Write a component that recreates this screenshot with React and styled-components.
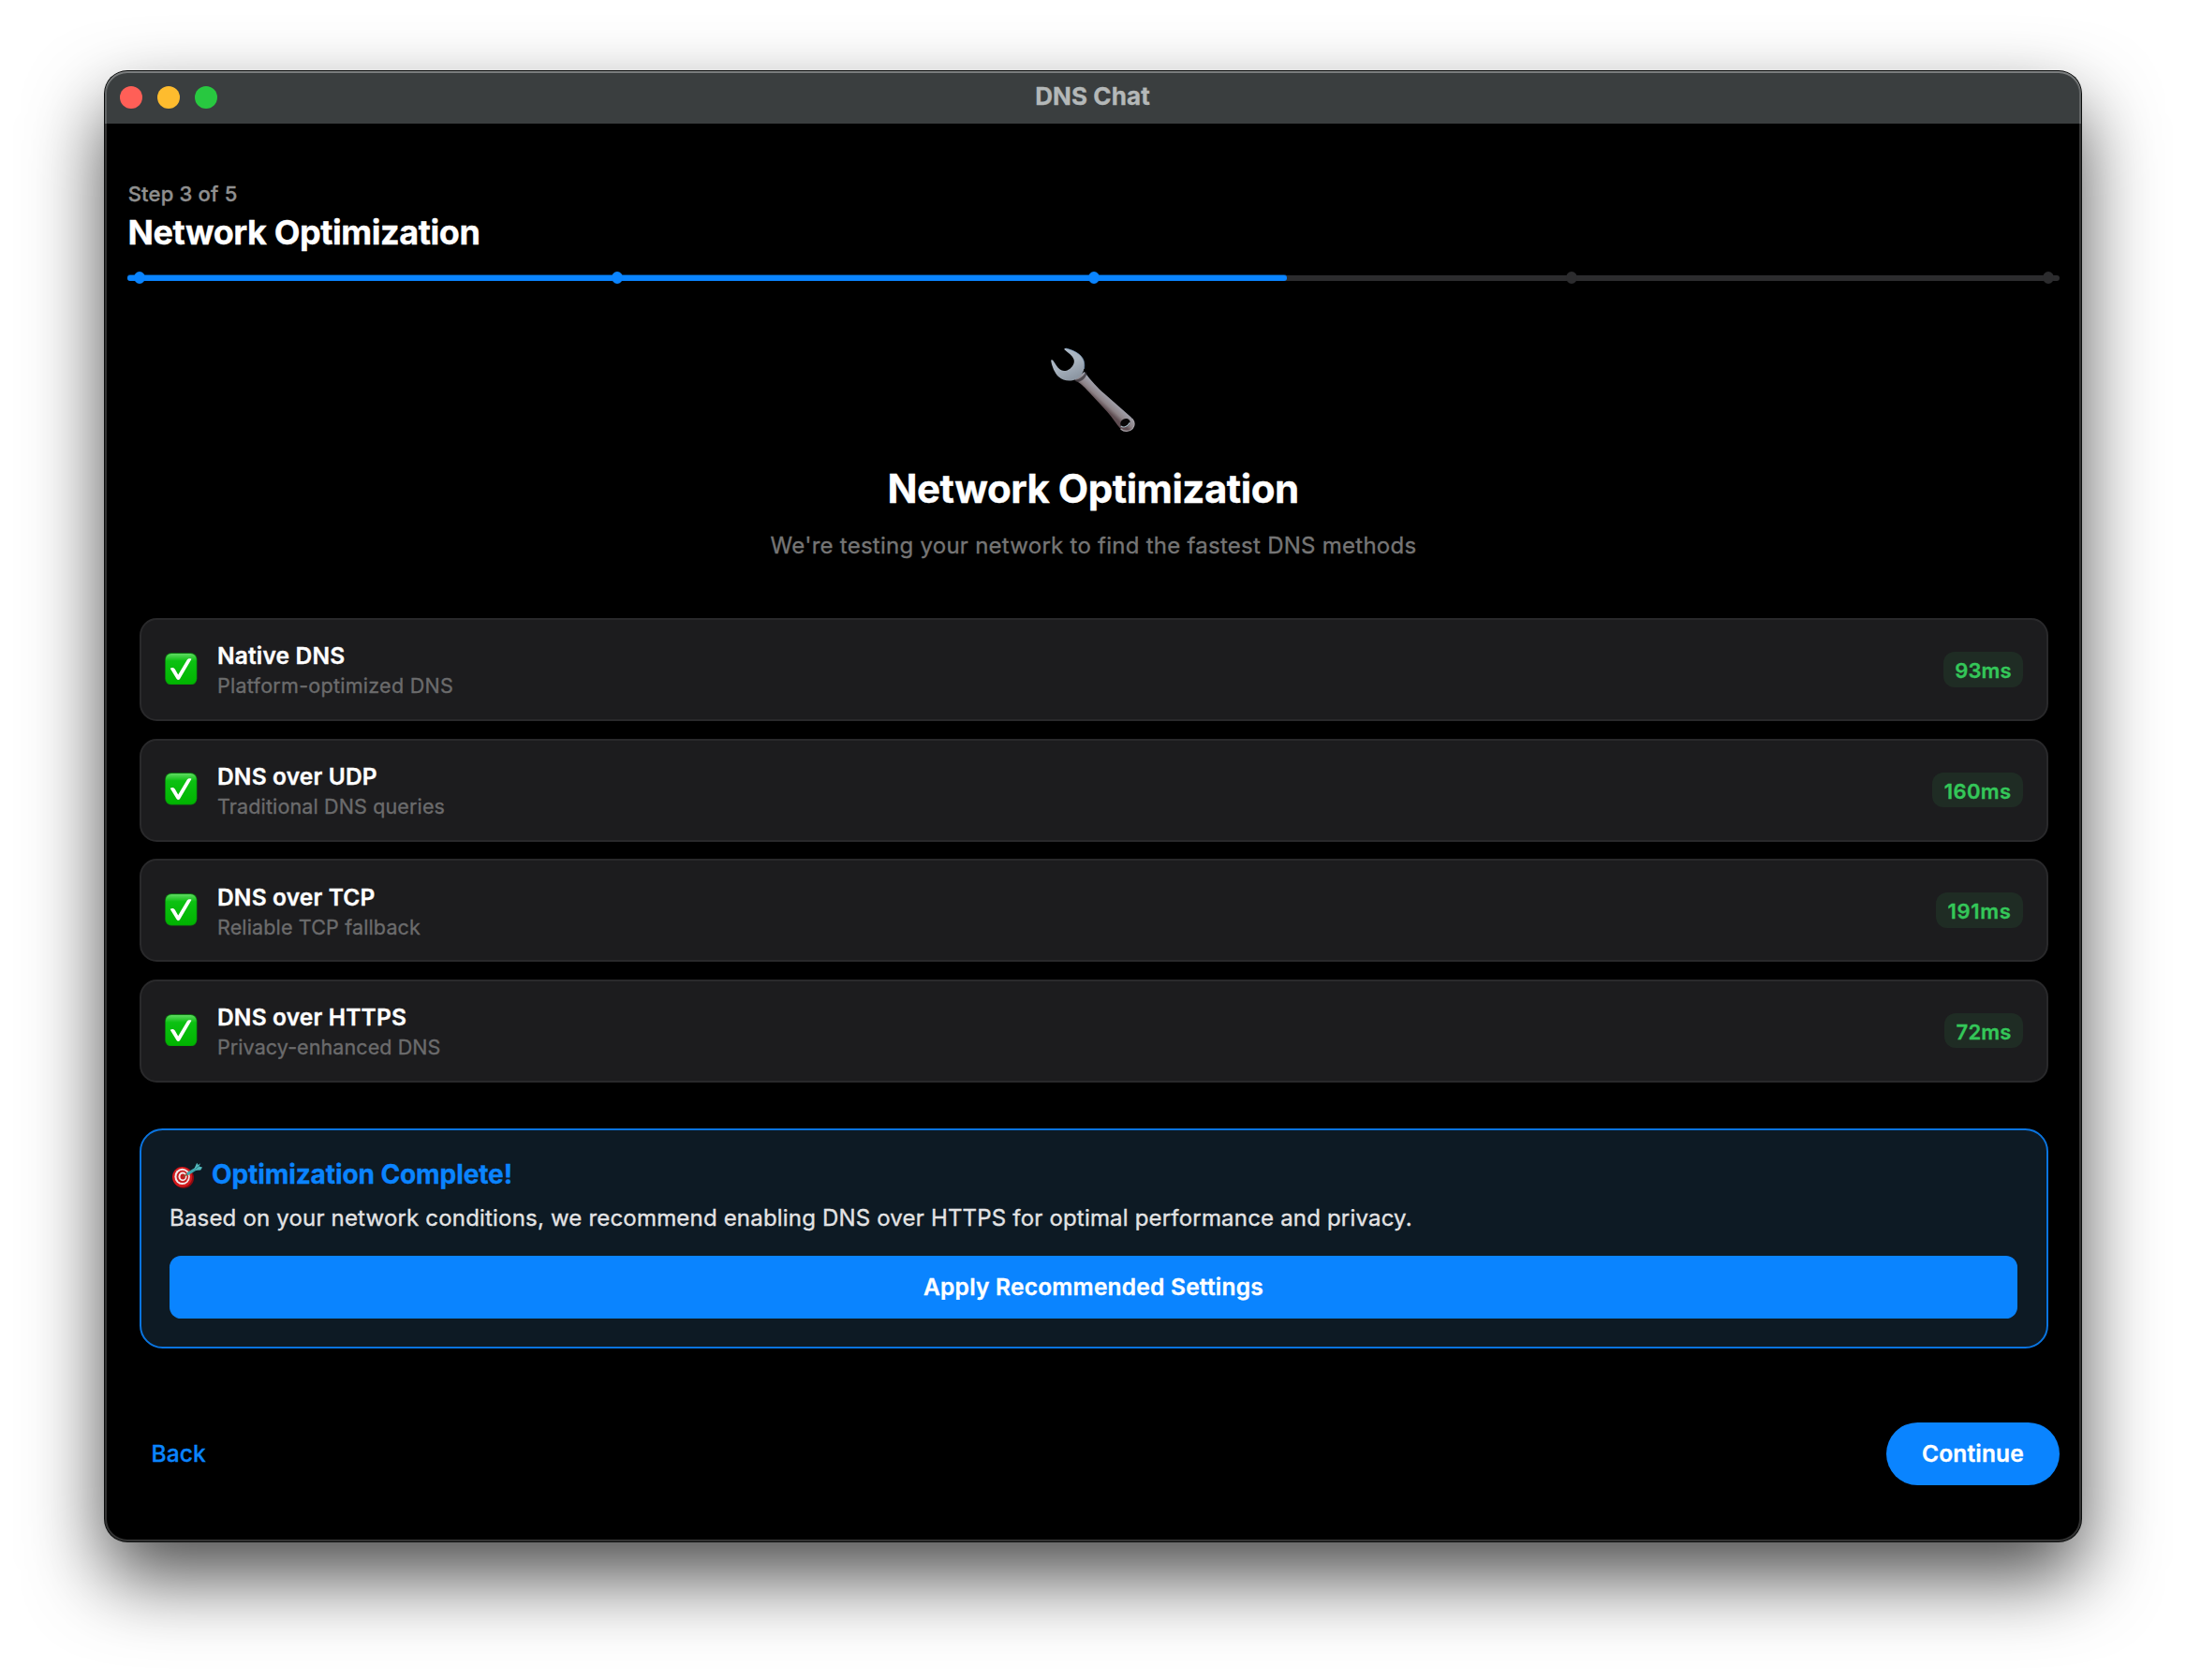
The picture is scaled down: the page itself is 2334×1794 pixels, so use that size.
import React from "react";
import styled, { createGlobalStyle } from "styled-components";

const GlobalStyle = createGlobalStyle`
  * { box-sizing: border-box; }
  html, body { margin: 0; background: #fff; }
  body {
    font-family: Inter, "Liberation Sans", sans-serif;
    -webkit-font-smoothing: antialiased;
    -webkit-text-stroke: 0.35px currentColor;
  }
  button {
    font: inherit;
    border: 0;
    padding: 0;
    margin: 0;
    background: none;
    cursor: pointer;
  }
`;

const Desktop = styled.div`
  height: 1794px;
  padding: 76px 112px 0;
  overflow: hidden;
`;

const Window = styled.main`
  position: relative;
  height: 1570px;
  display: flex;
  flex-direction: column;
  border-radius: 24px;
  background: #000;
  box-shadow:
    0 0 0 1px #0b0d0d,
    0 38px 82px rgba(0, 0, 0, 0.7);

  &::after {
    content: "";
    position: absolute;
    inset: 0;
    border-radius: 24px;
    pointer-events: none;
    box-shadow:
      inset 0 0 0 2px rgba(255, 255, 255, 0.2),
      inset 0 2px 0 rgba(255, 255, 255, 0.17);
  }
`;

const TitleBar = styled.header`
  height: 56px;
  flex: none;
  display: grid;
  grid-template-columns: 1fr auto 1fr;
  align-items: center;
  padding: 0 17px 0 16px;
  border-radius: 24px 24px 0 0;
  background: #3a3e3f;
`;

const Lights = styled.div`
  display: flex;
  gap: 16px;
`;

const Light = styled.span`
  width: 24px;
  height: 24px;
  border-radius: 50%;
  background: ${(p) => p.$color};
`;

const WindowTitle = styled.div`
  font-size: 26px;
  font-weight: 700;
  line-height: 32px;
  letter-spacing: 0.1px;
  margin-top: -3px;
  color: #b4b8b8;
`;

const Content = styled.div`
  display: flex;
  flex-direction: column;
  padding: 60px 23px 0 24px;
`;

const StepLabel = styled.div`
  padding-left: 0.7px;
  font-size: 22px;
  font-weight: 500;
  line-height: 30px;
  letter-spacing: 0.2px;
  color: #8f8f8f;
`;

const StepTitle = styled.h1`
  margin: 4px 0 0;
  padding-left: 0.5px;
  font-size: 36px;
  font-weight: 700;
  line-height: 44px;
  letter-spacing: -0.43px;
  color: #fff;
`;

const Track = styled.div`
  position: relative;
  height: 6px;
  margin-top: 24px;
  border-radius: 3px;
  background: #2c2c2e;
`;

const Fill = styled.div`
  width: 60%;
  height: 100%;
  border-radius: 3px;
  background: #0a84ff;
  box-shadow: 0 -1px 0 rgba(10, 132, 255, 0.4);
`;

const Dots = styled.div`
  position: absolute;
  inset: -4px 6px auto 7px;
  display: flex;
  justify-content: space-between;
`;

const Dot = styled.span`
  width: 12px;
  height: 13px;
  border-radius: 50%;
  background: ${(p) => (p.$done ? "#0a84ff" : "#2c2c2e")};
`;

const Hero = styled.section`
  display: flex;
  flex-direction: column;
  align-items: center;
  margin-top: 70px;
`;

const WrenchArt = styled.svg`
  width: 92px;
  height: 92px;
  display: block;
  margin-right: 1px;
`;

const HeroTitle = styled.h2`
  margin: 34px 1px 0 0;
  font-size: 42px;
  font-weight: 700;
  line-height: 52px;
  letter-spacing: -0.47px;
  color: #fff;
`;

const HeroText = styled.p`
  margin: 19.6px 0 0;
  font-size: 24px;
  font-weight: 400;
  line-height: 30px;
  letter-spacing: 0.26px;
  color: #757575;
`;

const MethodList = styled.ul`
  list-style: none;
  margin: 62.4px 12px 0 13px;
  padding: 0;
  display: flex;
  flex-direction: column;
  gap: 18.4px;
`;

const MethodCard = styled.li`
  height: 110.2px;
  display: flex;
  align-items: flex-start;
  padding: 23.4px 25px 0 25px;
  border: 2px solid #29292b;
  border-radius: 18.5px;
  background: #1c1c1e;
`;

const CheckArt = styled.svg`
  width: 34.6px;
  height: 34.6px;
  flex: none;
  margin: 11.4px 21.4px 0 0;
`;

const MethodText = styled.div`
  flex: 1;
`;

const MethodName = styled.div`
  font-size: 24.5px;
  font-weight: 600;
  line-height: 30px;
  letter-spacing: 0.18px;
  color: #fff;
`;

const MethodNote = styled.div`
  margin-top: 3px;
  font-size: 21.5px;
  font-weight: 400;
  line-height: 28px;
  letter-spacing: ${(p) => p.$tracking}px;
  color: #6b6b6c;
`;

const Latency = styled.div`
  height: 37.7px;
  margin-top: 10.6px;
  padding: 0 12.4px;
  border-radius: 12px;
  background: #1f2c24;
  font-size: 22px;
  font-weight: 600;
  line-height: 40px;
  letter-spacing: ${(p) => p.$tracking}px;
  color: #34c759;
`;

const Result = styled.section`
  height: 235.3px;
  display: flex;
  flex-direction: column;
  margin: 48.7px 12px 0 13px;
  padding: 30px 31px 0 30px;
  border: 2px solid #0a74df;
  border-radius: 24.6px;
  background: #0d1a24;
`;

const ResultTitle = styled.h3`
  margin: 0;
  display: flex;
  align-items: center;
  font-size: 28px;
  font-weight: 700;
  line-height: 34px;
  letter-spacing: -0.09px;
  color: #0a84ff;
`;

const TargetArt = styled.svg`
  width: 34px;
  height: 28px;
  margin: 2px 9px 0 2px;
`;

const ResultText = styled.p`
  margin: 12px 0 0;
  font-size: 24px;
  font-weight: 400;
  line-height: 36px;
  letter-spacing: 0.185px;
  color: #e3e3e4;
`;

const ApplyButton = styled.button`
  height: 67px;
  flex: none;
  margin-top: 22.3px;
  border-radius: 12.3px;
  background: #0a84ff;
  color: #fff;
  font-size: 24.5px;
  font-weight: 600;
  letter-spacing: 0.23px;
`;

const Footer = styled.footer`
  display: flex;
  justify-content: space-between;
  align-items: center;
  margin-top: 79px;
`;

const BackButton = styled.button`
  margin-left: 25.5px;
  color: #0a84ff;
  font-size: 24.5px;
  font-weight: 500;
  letter-spacing: 0.1px;
`;

const ContinueButton = styled.button`
  width: 185px;
  height: 67px;
  border-radius: 34px;
  background: #0a84ff;
  color: #fff;
  font-size: 24.5px;
  font-weight: 600;
  letter-spacing: 0.17px;
`;

const Wrench = () => (
  <WrenchArt viewBox="0 0 92 92" aria-hidden="true">
    <defs>
      <linearGradient id="wrenchHead" x1="0" y1="0" x2="0.5" y2="1">
        <stop offset="0" stopColor="#adbac8" />
        <stop offset="0.6" stopColor="#a8b3bf" />
        <stop offset="1" stopColor="#8d97a3" />
      </linearGradient>
      <linearGradient id="wrenchHandle" gradientUnits="userSpaceOnUse" x1="63" y1="50" x2="53" y2="61">
        <stop offset="0" stopColor="#9fb0c4" />
        <stop offset="0.22" stopColor="#a09fa9" />
        <stop offset="0.7" stopColor="#8d8387" />
        <stop offset="1" stopColor="#5f4d52" />
      </linearGradient>
    </defs>
    <path
      d="M36.8 27 C44 37 51 44 58 50.3 L86.4 75.2 C90.5 79 91 84 88.2 87.6 C85 91.3 79 91.6 76 88.6 C71 83 67 76 61 69.5 L42 49 C36 42.5 32 39 26.5 35.8 Z"
      fill="url(#wrenchHandle)"
    />
    <path d="M26 36.4 C32 35 36.5 31.5 38 26.5 L39.6 29 C38 34 34 37.4 29 38 Z" fill="#2f2b31" opacity="0.7" />
    <path
      d="M1.2 15.2 C1 14 2.7 13.9 3.4 14.9 C5.6 18 8 22.3 10.8 24.6 C13.5 26.8 18.4 26.3 21.8 23.4 C25 20.5 26.6 17.4 25.5 13.8 C24.2 10.2 20 7 16 3.8 C14.8 2.8 15.4 1.6 17 2 C25 4 33.6 7.8 36 15 C38 22 36 30 29.5 34.2 C23 38 14.5 37.2 9.5 32.6 C5 28.2 2.2 21.5 1.2 15.2 Z"
      fill="url(#wrenchHead)"
    />
    <path d="M17 2 C25 4 33.6 7.8 36 15 C36.9 18 37 21 36.4 24" fill="none" stroke="#7ea2c9" strokeWidth="0.9" opacity="0.7" />
    <path d="M75.6 88 C79 91.2 85 91.3 88.2 87.6 C90.6 84.4 90.6 80.8 88 77.4" fill="none" stroke="#a5a0a6" strokeWidth="1.3" />
    <ellipse cx="80.4" cy="81.6" rx="5.4" ry="4.4" transform="rotate(-28 80.4 81.6)" fill="#080607" />
    <path d="M75.8 84.8 C77.8 87 82.6 86.2 85.4 81.4" fill="none" stroke="#b1c3cf" strokeWidth="1.1" />
  </WrenchArt>
);

const Check = () => (
  <CheckArt viewBox="0 0 34 34" aria-hidden="true">
    <defs>
      <linearGradient id="checkFace" x1="0" y1="0" x2="0" y2="1">
        <stop offset="0" stopColor="#5fdc62" />
        <stop offset="0.12" stopColor="#37cc3b" />
        <stop offset="0.24" stopColor="#0cc112" />
        <stop offset="1" stopColor="#00b400" />
      </linearGradient>
    </defs>
    <rect x="0.2" y="0.2" width="33.6" height="33.6" rx="6.5" fill="#078a0c" />
    <rect x="0.9" y="0.9" width="32.2" height="32.2" rx="6" fill="url(#checkFace)" />
    <path d="M5.6 16.4 C7.6 15.2 9.6 15.4 10.6 17.2 L14 23.2 L23.4 7.4 C24.4 6 26.4 5.8 28 6.6 L15.8 27.4 C15 28.9 13.2 28.8 12.4 27.4 Z" fill="#fff" />
  </CheckArt>
);

const Target = () => (
  <TargetArt viewBox="0 0 34 28" aria-hidden="true">
    <ellipse cx="13" cy="16.8" rx="11" ry="11" fill="#8e0a10" />
    <ellipse cx="11.6" cy="15.8" rx="10.6" ry="10.8" fill="#d3191c" />
    <ellipse cx="11.6" cy="15.4" rx="8.2" ry="8.6" fill="#f3e9e8" />
    <ellipse cx="11.8" cy="15.4" rx="6.3" ry="6.7" fill="#c91b1d" />
    <ellipse cx="12" cy="15.4" rx="4.5" ry="4.8" fill="#f3e9e8" />
    <ellipse cx="12.2" cy="15.4" rx="2.7" ry="3" fill="#c4181b" />
    <path d="M12.6 15.6 L19 11.6" stroke="#7d5a33" strokeWidth="1.4" />
    <path d="M17 11 L20 13.2 L18.6 13.6 L16.8 12.4 Z" fill="#e8b12c" />
    <path d="M18 12.2 L28 6" stroke="#3fa6ad" strokeWidth="3.2" strokeLinecap="round" />
    <path d="M24.6 6.4 L27.2 0.8 L28.6 3 L31 1.2 L29.6 4.6 L33 5.4 L31.2 8.4 L26 8.8 Z" fill="#52b9bd" />
    <path d="M25.6 7.6 L29.8 3.8" stroke="#1f6f78" strokeWidth="0.9" />
  </TargetArt>
);

const METHODS = [
  { name: "Native DNS", note: "Platform-optimized DNS", noteTracking: 0.27, latency: "93ms", latencyTracking: 0.1 },
  { name: "DNS over UDP", note: "Traditional DNS queries", noteTracking: 0.14, latency: "160ms", latencyTracking: 0.42 },
  { name: "DNS over TCP", note: "Reliable TCP fallback", noteTracking: 0.15, latency: "191ms", latencyTracking: 0.7 },
  { name: "DNS over HTTPS", note: "Privacy-enhanced DNS", noteTracking: 0.09, latency: "72ms", latencyTracking: 0.2 },
];

const STEPS = [1, 2, 3, 4, 5];
const CURRENT_STEP = 3;

export default function App() {
  return (
    <>
      <GlobalStyle />
      <Desktop>
        <Window>
          <TitleBar>
            <Lights>
              <Light $color="#ff5f57" />
              <Light $color="#febc2e" />
              <Light $color="#28c840" />
            </Lights>
            <WindowTitle>DNS Chat</WindowTitle>
          </TitleBar>
          <Content>
            <StepLabel>Step 3 of 5</StepLabel>
            <StepTitle>Network Optimization</StepTitle>
            <Track>
              <Fill />
              <Dots>
                {STEPS.map((s) => (
                  <Dot key={s} $done={s <= CURRENT_STEP} />
                ))}
              </Dots>
            </Track>
            <Hero>
              <Wrench />
              <HeroTitle>Network Optimization</HeroTitle>
              <HeroText>We're testing your network to find the fastest DNS methods</HeroText>
            </Hero>
            <MethodList>
              {METHODS.map((m) => (
                <MethodCard key={m.name}>
                  <Check />
                  <MethodText>
                    <MethodName>{m.name}</MethodName>
                    <MethodNote $tracking={m.noteTracking}>{m.note}</MethodNote>
                  </MethodText>
                  <Latency $tracking={m.latencyTracking}>{m.latency}</Latency>
                </MethodCard>
              ))}
            </MethodList>
            <Result>
              <ResultTitle>
                <Target />
                Optimization Complete!
              </ResultTitle>
              <ResultText>
                Based on your network conditions, we recommend enabling DNS over HTTPS for optimal performance and privacy.
              </ResultText>
              <ApplyButton>Apply Recommended Settings</ApplyButton>
            </Result>
            <Footer>
              <BackButton>Back</BackButton>
              <ContinueButton>Continue</ContinueButton>
            </Footer>
          </Content>
        </Window>
      </Desktop>
    </>
  );
}
